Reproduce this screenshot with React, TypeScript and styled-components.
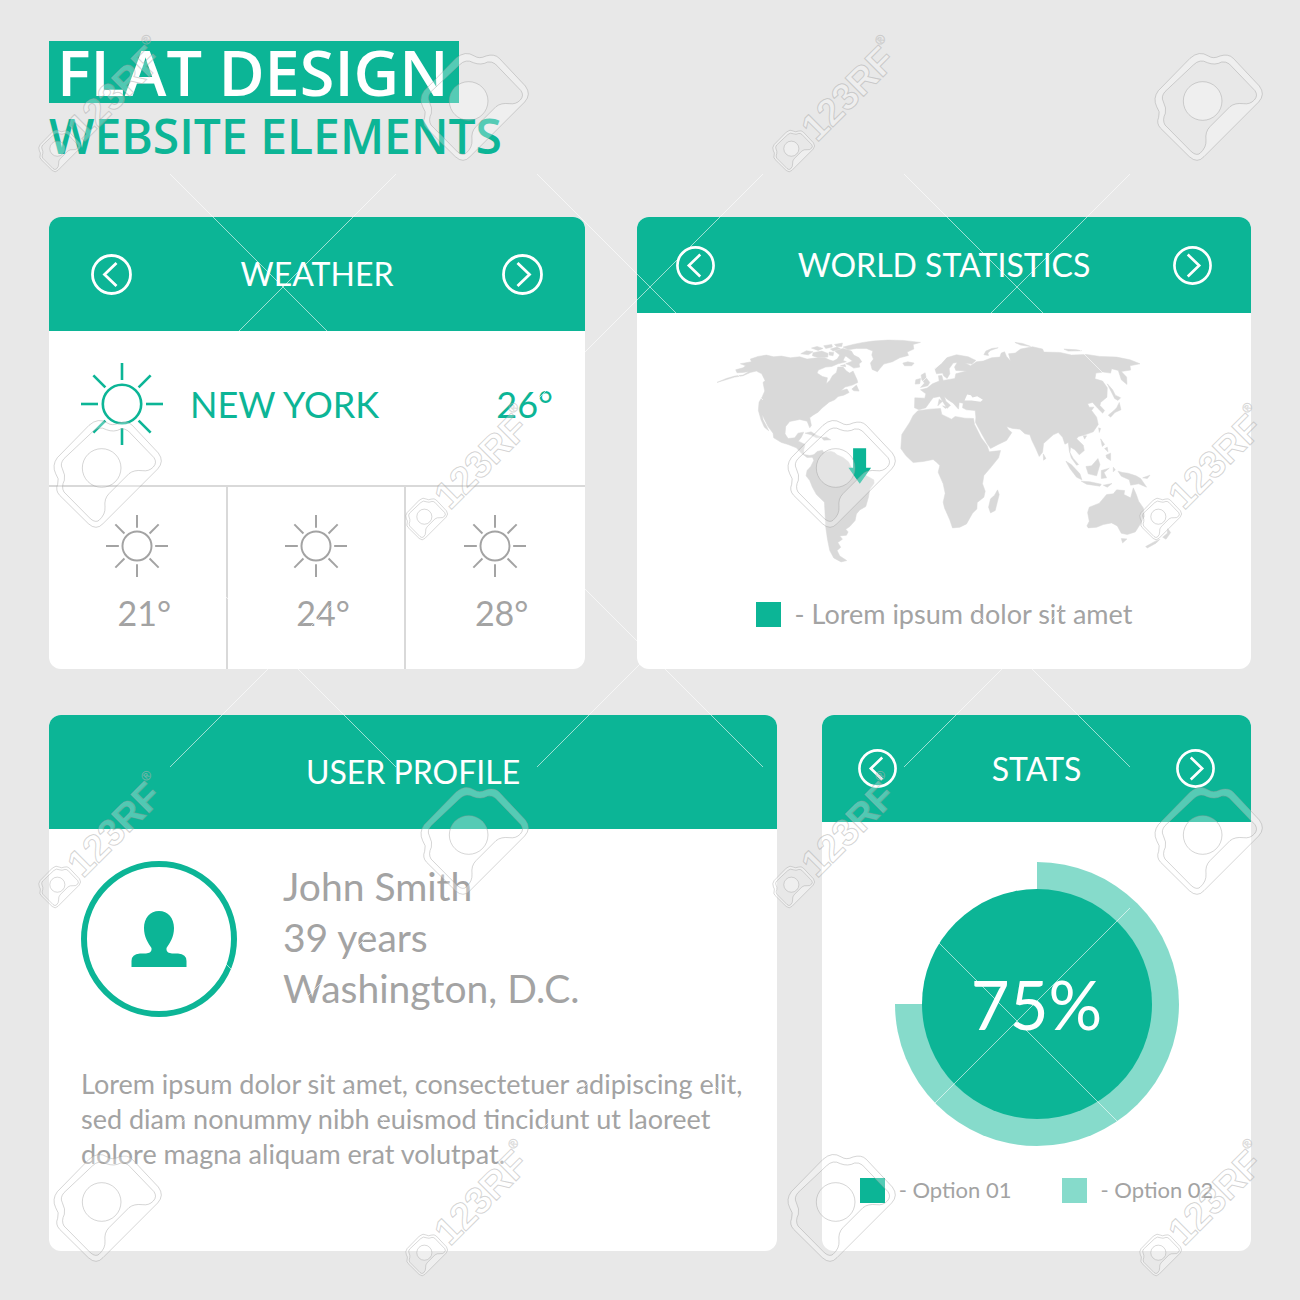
import React from "react";
import styled, { createGlobalStyle, ThemeProvider } from "styled-components";

const theme = {
  green: "#0cb596",
  mint: "#86dbcb",
  page: "#e8e8e8",
  line: "#d9d9d9",
  grey: "#a3a3a3",
};

const GlobalStyle = createGlobalStyle`
  * { box-sizing: border-box; }
  body {
    margin: 0;
    background: ${theme.page};
    font-family: Lato, "Open Sans", sans-serif;
    color: ${theme.grey};
  }
  h1, h2, p, ul { margin: 0; padding: 0; font-weight: 400; }
  ul { list-style: none; }
`;

const Page = styled.main`
  position: relative;
  overflow: hidden;
  padding: 41px 49px 49px;
`;

const Masthead = styled.h1`
  display: flex;
  flex-direction: column;
  align-items: flex-start;
  height: 176px;
  font-family: "Open Sans", "Noto Sans", sans-serif;
  font-weight: 600;
  white-space: nowrap;
`;

const Banner = styled.span`
  padding: 0 10px 0 8px;
  background: ${theme.green};
  color: #fff;
  font-size: 63px;
  line-height: 62px;
`;

const Tagline = styled.span`
  color: ${theme.green};
  font-size: 48px;
  line-height: 66px;
`;

const Row = styled.div<{ $columns: string; $gap: number }>`
  display: grid;
  grid-template-columns: ${(p) => p.$columns};
  column-gap: ${(p) => p.$gap}px;
  & + & { margin-top: 46px; }
`;

const Card = styled.section`
  display: flex;
  flex-direction: column;
  min-width: 0;
  overflow: hidden;
  border-radius: 12px;
  background: #fff;
`;

const CardHeader = styled.header<{ $height: number; $inset: number }>`
  display: flex;
  align-items: center;
  justify-content: space-between;
  min-height: ${(p) => p.$height}px;
  padding: 0 ${(p) => p.$inset}px;
  background: ${theme.green};
  color: #fff;
`;

const CardTitle = styled.h2`
  flex: 1;
  font-size: 32px;
  line-height: 40px;
  text-align: center;
`;

const RoundButton = styled.button<{ $size: number }>`
  display: block;
  width: ${(p) => p.$size}px;
  height: ${(p) => p.$size}px;
  padding: 0;
  border: 0;
  background: none;
  color: inherit;
  cursor: pointer;
  svg { display: block; width: 100%; height: 100%; }
`;

const Today = styled.div`
  display: flex;
  align-items: center;
  padding: 32px 32px 40px;
  border-bottom: 2px solid ${theme.line};
  color: ${theme.green};
  font-size: 36px;
  line-height: 48px;
`;

const City = styled.p`
  flex: 1;
  padding-left: 27px;
`;

const Forecast = styled.ul`
  display: grid;
  grid-template-columns: repeat(3, 1fr);
  flex: 1;
`;

const Day = styled.li`
  display: flex;
  flex-direction: column;
  align-items: center;
  gap: 12px;
  padding: 28px 0 32px;
  border-right: 2px solid ${theme.line};
  font-size: 34px;
  line-height: 48px;
  &:last-child { border-right-color: transparent; }
`;

const Degrees = styled.span`
  padding-left: 14px;
`;

const MapBody = styled.div`
  display: flex;
  flex-direction: column;
  align-items: center;
  gap: 36px;
  padding: 24px 24px 0;
`;

const Legend = styled.ul<{ $size: number }>`
  display: flex;
  justify-content: center;
  gap: 50px;
  font-size: ${(p) => p.$size}px;
  line-height: 28px;
  white-space: nowrap;
`;

const LegendItem = styled.li`
  display: flex;
  align-items: center;
  gap: 14px;
`;

const Swatch = styled.span<{ $color: string }>`
  width: 25px;
  height: 25px;
  background: ${(p) => p.$color};
`;

const Person = styled.div`
  display: flex;
  gap: 46px;
  padding: 32px 32px 49px;
`;

const Avatar = styled.div`
  display: grid;
  place-items: center;
  width: 156px;
  height: 156px;
  border: 6px solid ${theme.green};
  border-radius: 50%;
`;

const Facts = styled.div`
  font-size: 39px;
  line-height: 51px;
`;

const Bio = styled.p`
  padding: 0 32px 80px;
  font-size: 27px;
  line-height: 35px;
`;

const StatsBody = styled.div`
  display: flex;
  flex-direction: column;
  align-items: center;
  gap: 30px;
  padding: 40px 24px 0;
`;

const Dial = styled.div`
  display: grid;
  place-items: center;
  width: 284px;
  height: 284px;
  border-radius: 50%;
  background: conic-gradient(${theme.mint} 75%, transparent 0);
`;

const DialFace = styled.strong`
  display: grid;
  place-items: center;
  width: 230px;
  height: 230px;
  border-radius: 50%;
  background: ${theme.green};
  color: #fff;
  font-size: 67px;
  font-weight: 400;
`;

const Overlay = styled.svg`
  position: absolute;
  top: 0;
  left: 0;
  pointer-events: none;
  font-family: "Liberation Sans", sans-serif;
`;

function Arrow({ to, size }: { to: "previous" | "next"; size: number }) {
  return (
    <RoundButton type="button" $size={size} aria-label={to}>
      <svg viewBox="0 0 41 41" fill="none" stroke="currentColor" strokeWidth="2.8">
        <circle cx="20.5" cy="20.5" r="19" />
        <path d={to === "previous" ? "M25.5 9 L13.5 20.5 L25.5 32" : "M15.5 9 L27.5 20.5 L15.5 32"} />
      </svg>
    </RoundButton>
  );
}

function Sun({ size, stroke }: { size: number; stroke: number }) {
  return (
    <svg width={size} height={size} viewBox="0 0 82 82" fill="none" stroke="currentColor" strokeWidth={stroke} aria-hidden="true">
      <circle cx="41" cy="41" r="19.2" />
      {[0, 45, 90, 135, 180, 225, 270, 315].map((a) => (
        <path key={a} d={a % 90 ? "M41 17.5 V0.5" : "M41 17 V0"} transform={`rotate(${a} 41 41)`} />
      ))}
    </svg>
  );
}

const AMERICAS = [
  "M52 186 L80 174 L105 167 L130 164 L148 153 L130 156 L112 157 L108 148 L130 142 L138 136 L122 130 L155 124 L152 116 L175 108 L200 104 L222 109 L245 107 L272 112 L300 109 L322 116 L345 113 L375 112 L388 118 L400 122 L412 116 L424 98 L436 108 L430 120 L440 124 L415 130 L396 138 L378 140 L356 149 L352 158 L368 168 L383 172 L380 190 L390 180 L398 166 L410 156 L414 140 L430 140 L440 152 L450 158 L460 152 L472 178 L474 186 L458 194 L436 200 L424 210 L442 206 L448 216 L432 224 L415 228 L405 238 L388 245 L380 252 L368 262 L355 275 L340 284 L330 292 L335 315 L330 322 L322 302 L300 297 L270 303 L258 318 L256 340 L265 354 L285 352 L295 338 L312 335 L305 350 L296 362 L316 372 L312 388 L312 402 L330 405 L345 402 L340 410 L322 411 L305 398 L290 382 L265 372 L245 366 L222 352 L220 338 L205 318 L194 296 L188 282 L190 298 L200 316 L207 331 L194 320 L184 298 L176 270 L178 245 L188 228 L195 212 L190 186 L196 180 L186 160 L170 152 L152 156 L130 166 L105 170 Z",
  "M430 80 L460 72 L490 66 L520 62 L565 59 L610 60 L662 66 L640 72 L642 86 L622 95 L626 105 L600 112 L578 124 L552 131 L540 145 L533 154 L517 147 L512 128 L521 116 L516 104 L519 92 L500 84 L470 84 L445 88 Z",
  "M405 92 L430 84 L455 92 L462 104 L478 112 L486 124 L478 130 L480 140 L462 143 L448 134 L438 130 L458 122 L440 108 L420 104 Z",
  "M303 100 L320 91 L340 94 L326 103 Z M340 97 L366 92 L385 99 L384 110 L356 112 L338 106 Z M335 83 L352 78 L370 84 L355 90 Z M372 76 L396 72 L398 80 L378 84 Z M392 86 L412 80 L422 85 L400 92 Z M404 72 L428 68 L426 78 L410 78 Z M388 95 L402 96 L400 106 L388 104 Z",
  "M456 206 L470 194 L478 212 L462 211 Z M422 136 L436 132 L438 139 Z",
  "M609 128 L624 124 L643 128 L636 136 L614 136 Z",
  "M664 164 L676 157 L679 172 L690 186 L684 196 L662 201 L674 188 L666 178 Z M648 178 L662 174 L660 190 L646 191 Z",
  "M316 338 L334 334 L352 345 L366 350 L350 352 L334 343 Z M366 352 L380 350 L393 358 L372 359 Z",
  "M343 402 L352 393 L368 389 L372 396 L392 392 L404 396 L412 403 L430 411 L446 424 L454 440 L462 450 L484 457 L504 468 L522 478 L523 488 L510 506 L506 530 L498 558 L480 568 L470 580 L466 600 L450 618 L438 626 L445 634 L440 644 L420 646 L428 656 L414 666 L423 680 L412 690 L420 706 L441 720 L424 724 L402 712 L390 690 L383 655 L378 620 L376 580 L374 545 L350 522 L338 500 L330 480 L319 466 L322 450 L333 438 L342 420 L338 408 Z",
];

const OLD_WORLD = [
  "M45 232 L75 233 L78 220 L62 208 L82 203 L98 190 L118 182 L116 166 L126 165 L130 180 L165 174 L168 160 L200 152 L168 150 L164 140 L172 126 L160 128 L148 145 L150 160 L142 174 L132 167 L128 158 L110 160 L105 145 L125 130 L140 112 L170 103 L205 109 L228 120 L216 131 L196 128 L212 136 L230 124 L250 122 L275 112 L300 110 L304 98 L314 94 L320 108 L332 122 L326 100 L346 98 L362 86 L398 79 L428 86 L432 95 L480 96 L515 104 L560 102 L600 108 L650 110 L690 118 L720 130 L690 136 L692 149 L664 153 L680 170 L681 192 L664 178 L655 150 L635 145 L632 158 L610 155 L588 158 L585 175 L608 182 L622 202 L621 230 L602 246 L600 255 L614 270 L608 278 L592 262 L578 246 L563 250 L568 260 L582 260 L575 270 L590 290 L595 312 L580 334 L555 343 L536 348 L530 355 L550 374 L553 390 L538 403 L525 388 L512 380 L510 396 L520 414 L536 432 L530 434 L514 412 L508 390 L505 366 L495 371 L488 350 L475 336 L460 343 L431 369 L428 395 L418 408 L408 385 L395 358 L390 343 L375 340 L360 326 L338 324 L320 318 L326 328 L336 336 L320 360 L295 372 L272 384 L262 370 L240 330 L227 306 L228 290 L226 270 L200 268 L188 262 L190 248 L178 246 L176 266 L160 248 L142 236 L134 228 L138 242 L152 254 L142 264 L128 242 L120 228 L100 232 L92 242 L78 262 L58 268 L44 262 Z",
  "M54 271 L90 266 L122 264 L126 282 L155 296 L166 288 L195 293 L221 294 L224 312 L244 352 L262 376 L268 394 L302 390 L296 412 L275 438 L252 465 L248 490 L256 512 L252 530 L232 546 L231 565 L218 578 L200 610 L180 620 L158 622 L150 598 L134 562 L130 545 L136 518 L130 490 L115 455 L120 435 L110 425 L100 417 L70 423 L40 426 L18 405 L3 384 L6 342 L30 305 L40 285 Z",
  "M293 508 L298 522 L286 570 L272 577 L266 560 L272 535 L284 524 Z",
  "M252 103 L258 92 L276 84 L295 82 L272 90 L264 98 L266 105 Z M345 66 L368 69 L392 78 L362 74 Z M492 86 L530 88 L545 91 L505 92 Z M128 242 L118 236 L114 256 L120 250 Z M128 256 L142 260 L136 264 Z",
  "M622 190 L638 208 L646 224 L662 232 L654 240 L644 234 Z M658 246 L663 268 L645 276 L632 290 L625 284 L642 270 L650 262 Z M596 322 L602 324 L598 336 Z M550 346 L560 346 L554 356 Z",
  "M430 400 L438 414 L431 419 Z",
  "M498 422 L514 432 L540 460 L546 478 L530 470 L510 444 Z M544 482 L570 484 L604 491 L600 497 L560 491 Z M610 494 L636 489 L622 500 Z",
  "M558 438 L575 436 L594 414 L600 432 L590 466 L565 460 Z M604 450 L628 443 L612 456 L620 472 L604 474 Z M602 355 L614 372 L607 378 Z M614 384 L622 380 L624 394 Z M618 404 L632 398 L632 420 L620 412 Z M640 440 L646 448 L640 454 Z",
  "M654 452 L668 456 L684 458 L708 466 L722 474 L740 500 L716 490 L692 494 L688 478 L664 467 Z M728 472 L750 464 L742 474 Z",
  "M563 576 L568 560 L598 548 L620 522 L640 520 L650 508 L674 510 L672 522 L692 532 L700 502 L709 522 L716 542 L730 562 L733 588 L720 612 L706 634 L682 642 L664 638 L652 616 L635 607 L610 612 L590 620 L565 622 L561 616 L568 602 Z",
  "M664 654 L681 655 L668 667 Z M737 678 L762 664 L780 656 L768 668 L742 682 Z M788 650 L802 638 L803 624 L812 636 L798 656 Z",
];

function WorldMap() {
  return (
    <svg width="457" height="227" viewBox="49 50 1370 680" role="img" aria-label="World map">
      <g fill={theme.line} stroke={theme.line} strokeWidth="1.5">
        {AMERICAS.map((d) => <path key={d} d={d} />)}
        <g transform="translate(600 0)">
          {OLD_WORLD.map((d) => <path key={d} d={d} />)}
        </g>
      </g>
      <path fill="#fff" d="M794 240 L802 222 L813 224 L818 231 L832 227 L849 238 L842 244 L815 240 Z" />
      <path fill={theme.green} d="M460 383 H499 V442 H514 L480 490 L446 442 H460 Z" />
    </svg>
  );
}

function Camera() {
  return (
    <>
      <path
        fillRule="evenodd"
        d="M180 85 Q208 60 235 78 Q250 88 270 78 Q295 70 310 85 L388 168 Q407 193 386 216 L222 380 Q202 402 178 380 L92 295 Q78 280 86 262 Q92 245 80 230 Q68 205 85 182 Z M190 105 Q210 85 232 98 Q255 107 275 96 Q288 94 298 102 L375 182 Q385 197 373 210 Q360 224 340 221 Q315 218 300 230 L240 290 Q225 305 228 330 Q230 352 210 370 Q200 378 185 366 L105 285 Q96 270 106 250 Q110 235 100 215 Q92 200 105 185 Z"
      />
      <circle cx="218" cy="213" r="58" />
    </>
  );
}

function Watermark() {
  const steps = [0, 1, 2, 3];
  return (
    <Overlay width="1300" height="1300" aria-hidden="true">
      <g stroke="#fff" strokeOpacity="0.6">
        {[0, 1, 2].flatMap((r) =>
          [0, 1, 2].map((c) => (
            <path
              key={`${r}:${c}`}
              transform={`translate(${283 + c * 367} ${287 + r * 367})`}
              d="M-113 -113 L113 113 M113 -113 L-113 113"
            />
          ))
        )}
      </g>
      <g fill="#fff" fillOpacity="0.3" stroke="#999" strokeOpacity="0.42">
        {steps.flatMap((r) =>
          steps.map((c) =>
            (r + c) % 2 ? (
              <g key={`${r}:${c}`} transform={`translate(${29 + c * 367} ${30 + r * 367}) scale(0.3333)`} strokeWidth="3">
                <Camera />
              </g>
            ) : (
              <g key={`${r}:${c}`} transform={`translate(${c * 367 + 6} ${r * 368 + 20})`}>
                <g transform="translate(23 101) scale(0.13)" strokeWidth="7">
                  <Camera />
                </g>
                <g transform="translate(77 123) rotate(-45)">
                  <text fontSize="38" fontWeight="700">123RF</text>
                  <text x="113" y="-24" fontSize="13" strokeWidth="0.5">®</text>
                </g>
              </g>
            )
          )
        )}
      </g>
    </Overlay>
  );
}

const FORECAST = [21, 24, 28];

export default function App() {
  return (
    <ThemeProvider theme={theme}>
      <GlobalStyle />
      <Page>
        <Masthead>
          <Banner>FLAT DESIGN</Banner>
          <Tagline>WEBSITE ELEMENTS</Tagline>
        </Masthead>

        <Row $columns="536fr 614fr" $gap={52}>
          <Card>
            <CardHeader $height={114} $inset={42}>
              <Arrow to="previous" size={41} />
              <CardTitle>WEATHER</CardTitle>
              <Arrow to="next" size={41} />
            </CardHeader>
            <Today>
              <Sun size={82} stroke={2.6} />
              <City>NEW YORK</City>
              <span>26°</span>
            </Today>
            <Forecast>
              {FORECAST.map((t) => (
                <Day key={t}>
                  <Sun size={62} stroke={2.6} />
                  <Degrees>{t}°</Degrees>
                </Day>
              ))}
            </Forecast>
          </Card>

          <Card>
            <CardHeader $height={96} $inset={39}>
              <Arrow to="previous" size={39} />
              <CardTitle>WORLD STATISTICS</CardTitle>
              <Arrow to="next" size={39} />
            </CardHeader>
            <MapBody>
              <WorldMap />
              <Legend $size={27}>
                <LegendItem>
                  <Swatch $color={theme.green} />- Lorem ipsum dolor sit amet
                </LegendItem>
              </Legend>
            </MapBody>
          </Card>
        </Row>

        <Row $columns="728fr 429fr" $gap={45}>
          <Card>
            <CardHeader $height={114} $inset={42}>
              <CardTitle>USER PROFILE</CardTitle>
            </CardHeader>
            <Person>
              <Avatar>
                <svg width="56" height="56" viewBox="0 0 56 56" fill={theme.green} aria-hidden="true">
                  <path d="M28 0 C37 0 43 7 43 17 C43 26 39 32 35.500 37 V39 Q36 42 41 42.500 H47 Q55.500 43 55.500 50 V56 H0.500 V50 Q0.500 43 9 42.500 H15 Q20 42 20.500 39 V37 C17 32 13 26 13 17 C13 7 19 0 28 0 Z" />
                </svg>
              </Avatar>
              <Facts>
                <p>John Smith</p>
                <p>39 years</p>
                <p>Washington, D.C.</p>
              </Facts>
            </Person>
            <Bio>
              Lorem ipsum dolor sit amet, consectetuer adipiscing elit, sed diam nonummy nibh euismod
              tincidunt ut laoreet dolore magna aliquam erat volutpat.
            </Bio>
          </Card>

          <Card>
            <CardHeader $height={107} $inset={36}>
              <Arrow to="previous" size={39} />
              <CardTitle>STATS</CardTitle>
              <Arrow to="next" size={39} />
            </CardHeader>
            <StatsBody>
              <Dial>
                <DialFace>75%</DialFace>
              </Dial>
              <Legend $size={22}>
                <LegendItem>
                  <Swatch $color={theme.green} />- Option 01
                </LegendItem>
                <LegendItem>
                  <Swatch $color={theme.mint} />- Option 02
                </LegendItem>
              </Legend>
            </StatsBody>
          </Card>
        </Row>
        <Watermark />
      </Page>
    </ThemeProvider>
  );
}
